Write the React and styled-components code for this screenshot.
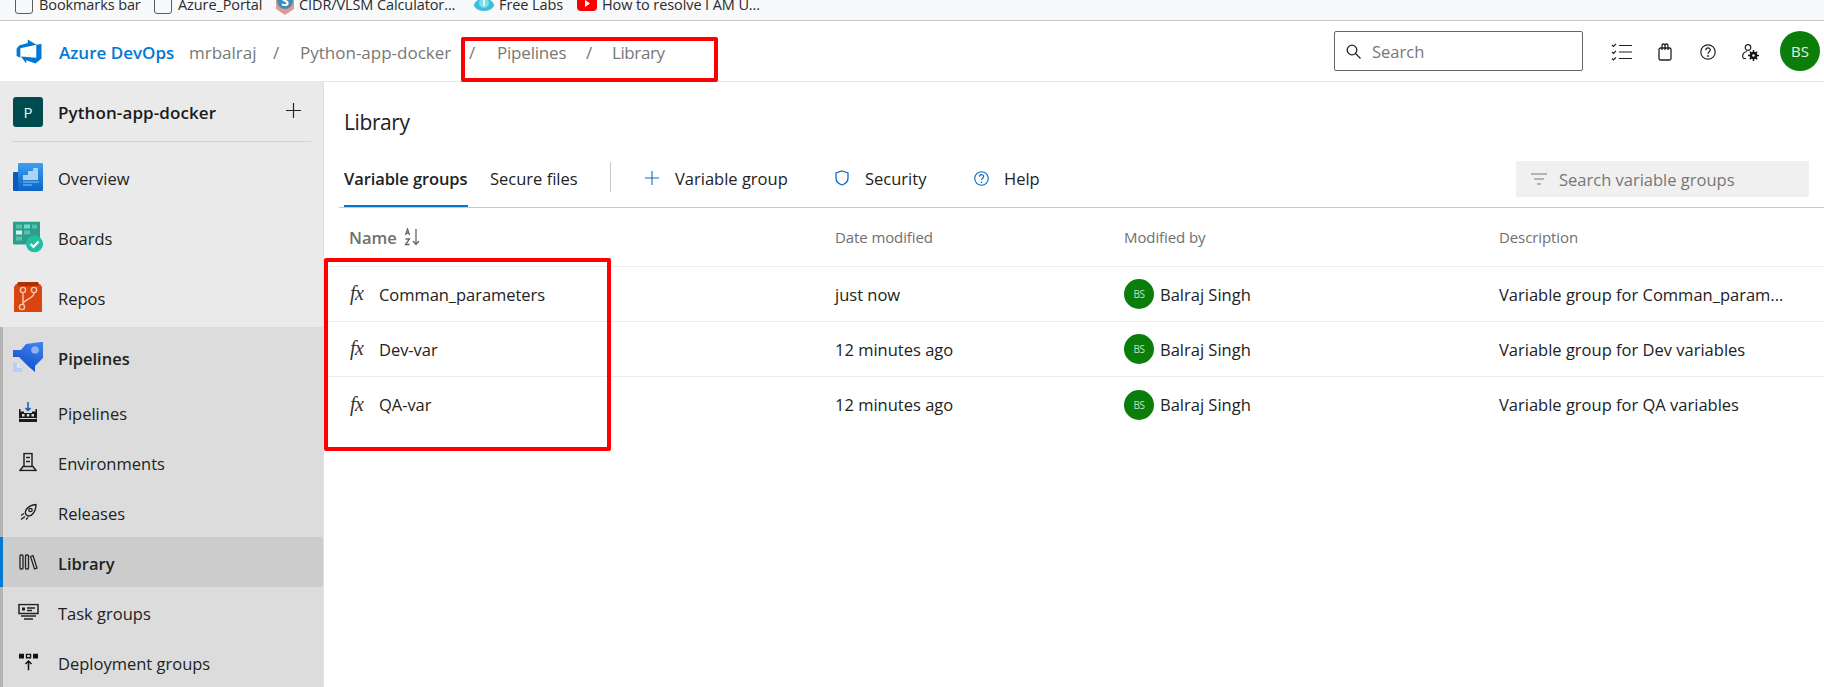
import styled, { createGlobalStyle } from "styled-components";

const GlobalStyle = createGlobalStyle`
  html, body { margin: 0; padding: 0; background: #fff; }
  body { font-family: "Open Sans", "Noto Sans", sans-serif; color: #1e1e1e; }
  * { box-sizing: border-box; }
`;

const Page = styled.div`
  position: relative;
  width: 1824px;
  height: 687px;
  overflow: hidden;
  background: #fff;
`;

/* ====== browser bookmarks ====== */
const BookmarkBar = styled.div`
  height: 21px;
  padding-left: 15px;
  display: flex;
  align-items: flex-end;
  overflow: hidden;
  background: #f8f9fb;
  border-bottom: 1px solid #c9c9cc;
`;

const Bookmark = styled.div`
  height: 30px;
  flex: none;
  width: ${(p) => p.$width}px;
  display: flex;
  align-items: center;
  gap: ${(p) => p.$gap || 6}px;
  font-size: 14.5px;
  letter-spacing: -0.1px;
  color: #2b2b2b;
  white-space: nowrap;
  position: relative;
  top: -1px;
`;

const FolderBox = styled.span`
  width: 18px;
  height: 22px;
  flex: none;
  border: 1.5px solid #5c5c5c;
  border-radius: 3px;
  position: relative;
  top: -1px;
`;

/* ====== top header ====== */
const TopBar = styled.header`
  height: 61px;
  display: flex;
  align-items: center;
  padding: 0 4px 0 16px;
  border-bottom: 1px solid #e8e8e8;
  background: #fff;
`;

const Brand = styled.span`
  margin-left: 16px;
  width: 130px;
  padding-top: 2px;
  font-size: 17px;
  font-weight: 600;
  color: #0078d4;
  white-space: nowrap;
`;

const Crumb = styled.span`
  width: ${(p) => p.$width}px;
  flex: none;
  padding-top: 2px;
  font-size: 17px;
  letter-spacing: ${(p) => p.$spacing || 0}px;
  color: #787878;
  white-space: nowrap;
`;

const TopSearch = styled.div`
  width: 249px;
  height: 40px;
  margin-left: auto;
  display: flex;
  align-items: center;
  gap: 11px;
  padding-left: 11px;
  border: 1px solid #666;
  border-radius: 2px;
  font-size: 16.5px;
  color: #777;
`;

const TopIcons = styled.div`
  display: flex;
  align-items: center;
  margin: 2px 8px 0 17px;
`;

const TopIconSlot = styled.span`
  width: 43px;
  display: flex;
  justify-content: center;
`;

const Avatar = styled.span`
  width: ${(p) => p.$size}px;
  height: ${(p) => p.$size}px;
  flex: none;
  border-radius: 50%;
  background: #0a7d0a;
  color: ${(p) => (p.$small ? "#bfe3bf" : "#e4f3e4")};
  font-size: ${(p) => (p.$small ? 10 : 15)}px;
  letter-spacing: ${(p) => (p.$small ? "-0.5px" : "0")};
  display: flex;
  align-items: center;
  justify-content: center;
`;

/* ====== page body ====== */
const Body = styled.div`
  display: flex;
  height: 605px;
`;

const Sidebar = styled.nav`
  width: 324px;
  flex: none;
  background: #eaeaea;
  border-right: 1px solid #e0e0e0;
  overflow: hidden;
`;

const ProjectRow = styled.div`
  height: 60px;
  margin: 0 12px;
  display: flex;
  align-items: center;
  border-bottom: 1px solid #d2d2d2;
`;

const ProjectTile = styled.span`
  width: 30px;
  height: 30px;
  margin-left: 1px;
  border-radius: 3px;
  background: #004b50;
  color: #dff;
  font-size: 15px;
  display: flex;
  align-items: center;
  justify-content: center;
`;

const ProjectName = styled.span`
  margin-left: 15px;
  padding-top: 2px;
  font-size: 17px;
  font-weight: 600;
  letter-spacing: 0.1px;
  color: #1b1b1b;
`;

const AddProject = styled.span`
  margin-left: auto;
  margin-right: 10px;
  display: flex;
  margin-top: -3px;
`;

const NavList = styled.div`
  padding-top: 5px;
`;

const NavGroup = styled.div`
  background: #dcdcdc;
  border-left: 3px solid #b3b3b3;
`;

const NavRow = styled.div`
  height: ${(p) => p.$height || 50}px;
  display: flex;
  align-items: center;
  padding-top: 3px;
  font-size: 16.5px;
  font-weight: ${(p) => (p.$bold ? 600 : 400)};
  color: #222;
  background: ${(p) => (p.$active ? "#cccccc" : "transparent")};
  border-radius: 0 3px 3px 0;
  position: relative;
  padding-left: ${(p) => (p.$inGroup ? 55 : 58)}px;
`;

const NavIcon = styled.span`
  position: absolute;
  left: ${(p) => p.$left}px;
  top: 50%;
  transform: translateY(-50%);
  display: flex;
`;

const ActiveStrip = styled.span`
  position: absolute;
  left: -3px;
  top: 0;
  bottom: 0;
  width: 3px;
  background: #0078d4;
`;

/* ====== library content ====== */
const Main = styled.main`
  flex: 1;
  min-width: 0;
`;

const Title = styled.h1`
  margin: 0;
  height: 68px;
  padding: 25px 0 0 20px;
  font-size: 21px;
  line-height: 30px;
  font-weight: 400;
  letter-spacing: -0.4px;
  color: #222;
`;

const TabBar = styled.div`
  height: 58px;
  margin-left: 15px;
  padding-left: 5px;
  display: flex;
  align-items: center;
  border-bottom: 1.5px solid #c8c8c8;
`;

const Tab = styled.span`
  height: 100%;
  width: ${(p) => p.$width}px;
  flex: none;
  display: flex;
  align-items: center;
  padding-bottom: 1px;
  font-size: 16.5px;
  font-weight: ${(p) => (p.$active ? 600 : 400)};
  letter-spacing: ${(p) => (p.$active ? "-0.1px" : "0")};
  color: #222;
  white-space: nowrap;
  ${(p) => (p.$active ? "box-shadow: inset 0 -2px 0 #0078d4;" : "")}
`;

const TabDivider = styled.span`
  width: 1px;
  height: 30px;
  margin-bottom: 3px;
  background: #c8c8c8;
  flex: none;
`;

const Action = styled.span`
  flex: none;
  width: ${(p) => p.$width}px;
  padding-left: ${(p) => p.$indent || 0}px;
  display: flex;
  align-items: center;
  gap: ${(p) => p.$gap}px;
  padding-bottom: 1px;
  font-size: 16.5px;
  color: #222;
  white-space: nowrap;
`;

const FilterBox = styled.div`
  width: 293px;
  height: 36px;
  margin-left: auto;
  margin-right: 15px;
  margin-top: 1px;
  display: flex;
  align-items: center;
  gap: 12px;
  padding-left: 15px;
  background: #f0f0f0;
  border-radius: 2px;
  font-size: 16.5px;
  color: #777;
`;

const TableRow = styled.div`
  display: grid;
  grid-template-columns: 511px 289px 375px 1fr;
  align-items: center;
  height: ${(p) => p.$height}px;
  border-bottom: 1px solid #ececec;

  &:last-child {
    border-bottom: 0;
  }
`;

const HeadCell = styled.span`
  display: flex;
  align-items: center;
  gap: 7px;
  font-size: ${(p) => (p.$large ? 16.5 : 15)}px;
  font-weight: ${(p) => (p.$large ? 600 : 400)};
  letter-spacing: ${(p) => (p.$large ? "0" : "-0.1px")};
  color: #707070;
  padding-left: ${(p) => (p.$large ? 25 : 0)}px;
`;

const NameCell = styled.span`
  display: flex;
  align-items: center;
  gap: 13px;
  padding-left: 26px;
  font-size: 16.5px;
  letter-spacing: -0.05px;
  color: #222;
`;

const Fx = styled.span`
  width: 16px;
  font-family: "Liberation Serif", serif;
  font-style: italic;
  font-size: 20px;
  letter-spacing: -0.5px;
  color: #333;
  margin-top: -1px;
`;

const TextCell = styled.span`
  font-size: 16.5px;
  color: #222;
  white-space: nowrap;
`;

const PersonCell = styled(TextCell)`
  display: flex;
  align-items: center;
  gap: 6px;
`;

const Callout = styled.div`
  position: absolute;
  left: ${(p) => p.$left}px;
  top: ${(p) => p.$top}px;
  width: ${(p) => p.$width}px;
  height: ${(p) => p.$height}px;
  border: 4px solid #f00;
  border-radius: 2px;
  pointer-events: none;
`;

/* ====== drawings ====== */
const DevOpsLogo = () => (
  <svg width="27" height="27" viewBox="0 0 18 18">
    <path fill="#0078d4" d="M17 4v9.74l-4 3.28-6.2-2.26V17L3.29 12.41l10.23.8V4.44Zm-3.41.49L7.85 1V3.29L2.08 5 .4 7.16v4.9l2.48 1.09V6.82z" />
  </svg>
);

const OverviewIcon = () => (
  <svg width="30" height="28" viewBox="0 0 30 28">
    <defs>
      <linearGradient id="ov" x1="0" y1="0" x2="0" y2="1">
        <stop offset="0" stopColor="#3d9ff0" />
        <stop offset="1" stopColor="#0c63c7" />
      </linearGradient>
    </defs>
    <path fill="#0b5cb8" d="M1 9h6v19H1a1 1 0 0 1-1-1V10a1 1 0 0 1 1-1z" />
    <rect x="5" y="0" width="25" height="28" rx="1" fill="url(#ov)" />
    <path fill="#a9d3f7" d="M10 12h5V8h5V5h5v12H10z" />
    <path stroke="#8cc4f3" strokeWidth="1.2" d="M10 19h16M10 22h9" />
  </svg>
);

const BoardsIcon = () => (
  <svg width="30" height="31" viewBox="0 0 30 31">
    <rect x="0" y="0" width="27" height="23" rx="1" fill="#2f9d8c" />
    <g fill="#56c2ae">
      <rect x="3" y="3" width="6" height="4" />
      <rect x="11" y="3" width="6" height="4" fill="#74d8c6" />
      <rect x="19" y="3" width="5" height="4" />
      <rect x="3" y="9" width="6" height="4" fill="#d5f3ed" />
      <rect x="11" y="9" width="6" height="4" />
      <rect x="3" y="15" width="6" height="4" />
    </g>
    <circle cx="21.5" cy="22.5" r="8.5" fill="#1fbfa3" />
    <path d="M17.5 22.5l3 3 5-5.5" fill="none" stroke="#fff" strokeWidth="2.2" />
  </svg>
);

const ReposIcon = () => (
  <svg width="28" height="30" viewBox="0 0 28 30">
    <path fill="#a93305" d="M4 0h20l2 4H2z" />
    <path fill="#d9440f" d="M2 2c2 2 4 2 6 2h12c2 0 4 0 6-2l2 3v25H0V5z" />
    <g fill="none" stroke="#f6c9b2" strokeWidth="1.4">
      <circle cx="9" cy="8" r="2.6" />
      <circle cx="20" cy="8" r="2.6" />
      <circle cx="8" cy="25" r="2.6" />
      <path d="M9 11v11M20 11c0 5-7 5-11 10" />
    </g>
  </svg>
);

const PipelinesIcon = () => (
  <svg width="30" height="30" viewBox="0 0 30 30">
    <defs>
      <linearGradient id="pi" x1="0.8" y1="0" x2="0.4" y2="1">
        <stop offset="0" stopColor="#3f80ea" />
        <stop offset="1" stopColor="#0d4fcf" />
      </linearGradient>
    </defs>
    <path fill="url(#pi)" d="M13 2L28 0h2v16l-8 8v6l-6-5L6 15H0V8h8z" />
    <circle cx="22" cy="8" r="3.8" fill="#8fb0f5" />
    <path fill="#b7cdf8" d="M0 21h4v5h5v4H0z" />
    <path fill="#dde7fb" d="M4 21l5 5H4z" />
  </svg>
);

const PipeSubIcon = () => (
  <svg width="20" height="20" viewBox="0 0 20 20">
    <path d="M10 0v8M7.5 6l2.5 2.5L12.5 6" fill="none" stroke="#0f5fa8" strokeWidth="1.5" />
    <path fill="#1a1a1a" d="M1 7h1.5v2.5H6V11h8V9.5h3.5V7H19v13H1z" />
    <g fill="#ddd">
      <rect x="4" y="12" width="2.5" height="2.5" />
      <rect x="8.8" y="12" width="2.5" height="2.5" />
      <rect x="13.5" y="12" width="2.5" height="2.5" />
      <rect x="1.5" y="16" width="17" height="1" />
    </g>
  </svg>
);

const EnvIcon = () => (
  <svg width="18" height="19" viewBox="0 0 18 19">
    <path d="M5 1h8v13H5zM1 18l3-4h10l3 4z" fill="none" stroke="#222" strokeWidth="1.5" />
    <path d="M7 5h4M7 9h4" stroke="#222" strokeWidth="1.5" />
  </svg>
);

const RocketIcon = () => (
  <svg width="17" height="17" viewBox="0 0 17 17">
    <path d="M6 11C4 8 7 2 16 1c0 8-5 12-8 11.5z" fill="none" stroke="#222" strokeWidth="1.4" />
    <circle cx="10.5" cy="6.5" r="1.7" fill="none" stroke="#222" strokeWidth="1.3" />
    <path d="M1 16l4-3M1 12l3-2M6 16l2-2" stroke="#222" strokeWidth="1.3" />
  </svg>
);

const LibraryIcon = () => (
  <svg width="19" height="16" viewBox="0 0 19 16">
    <g fill="none" stroke="#222" strokeWidth="1.3">
      <rect x="1" y="1" width="3" height="14" rx="1" />
      <rect x="6.5" y="1" width="3" height="14" rx="1" />
      <path d="M11.5 2.5l2.500-1 4 12.500-2.500 1z" />
    </g>
  </svg>
);

const TaskIcon = () => (
  <svg width="21" height="17" viewBox="0 0 21 17">
    <rect x="1" y="1" width="19" height="9" fill="none" stroke="#222" strokeWidth="1.5" />
    <path d="M4 4h3v3H4z" fill="#222" />
    <path d="M9 4.5h8M9 7h5M3 12.5h15M6 15.5h9" stroke="#222" strokeWidth="1.3" />
  </svg>
);

const DeployIcon = () => (
  <svg width="19" height="17" viewBox="0 0 19 17">
    <path fill="#111" d="M0 0h5v5H0zM14 0h5v5h-5z" />
    <rect x="7.5" y="0.7" width="4" height="3.6" fill="none" stroke="#111" strokeWidth="1.4" />
    <path d="M9.5 17V8M6.5 10.500l3-3 3 3" fill="none" stroke="#111" strokeWidth="1.5" />
  </svg>
);

const PlusIcon = ({ color = "#222", size = 14 }) => (
  <svg width={size} height={size} viewBox="0 0 14 14">
    <path d="M7 0v14M0 7h14" stroke={color} strokeWidth="1.1" />
  </svg>
);

const SearchIcon = () => (
  <svg width="15" height="15" viewBox="0 0 15 15">
    <circle cx="6" cy="6" r="4.8" fill="none" stroke="#222" strokeWidth="1.3" />
    <path d="M9.5 9.5l5 5" stroke="#222" strokeWidth="1.3" />
  </svg>
);

const ChecklistIcon = () => (
  <svg width="21" height="18" viewBox="0 0 21 18">
    <g fill="none" stroke="#222" strokeWidth="1.2">
      <path d="M1 2l1.5 1.5L5 .8M1 9l1.5 1.5L5 7.8M1 15.5L2.5 17 5 14.3" />
      <path d="M8 2.5h13M8 9h13M8 15.5h13" />
    </g>
  </svg>
);

const BagIcon = () => (
  <svg width="14" height="18" viewBox="0 0 14 18">
    <g fill="none" stroke="#222" strokeWidth="1.3">
      <rect x="1" y="5" width="12" height="12" rx="1.5" />
      <path d="M4 7V2.5a1.500 1.500 0 0 1 3 0V7M7 2.5a1.500 1.500 0 0 1 3 0V7" />
    </g>
  </svg>
);

const HelpIcon = ({ color = "#222", size = 16 }) => (
  <svg width={size} height={size} viewBox="0 0 16 16">
    <circle cx="8" cy="8" r="7.2" fill="none" stroke={color} strokeWidth="1.2" />
    <path d="M5.8 6.2c0-3 4.500-3 4.500-.2 0 1.700-2.300 1.700-2.300 3.700" fill="none" stroke={color} strokeWidth="1.2" />
    <circle cx="8" cy="12" r=".9" fill={color} />
  </svg>
);

const UserGearIcon = () => (
  <svg width="17" height="17" viewBox="0 0 17 17">
    <circle cx="6" cy="3.5" r="2.8" fill="none" stroke="#222" strokeWidth="1.2" />
    <path d="M1 14c-1-4 1-6 4-6.500M1 14.500h3" fill="none" stroke="#222" strokeWidth="1.2" />
    <circle cx="11.5" cy="11.5" r="3.8" fill="#111" />
    <path d="M11.5 6v11M6 11.500h11M7.800 7.800l7.400 7.400M15.200 7.800l-7.400 7.400" stroke="#111" strokeWidth="1.4" />
    <circle cx="11.5" cy="11.5" r="1.3" fill="#fff" />
  </svg>
);

const ShieldIcon = () => (
  <svg width="14" height="16" viewBox="0 0 14 16">
    <path d="M7 1l6 2v5c0 4-3 6-6 7-3-1-6-3-6-7V3z" fill="none" stroke="#0f6cbd" strokeWidth="1.3" />
  </svg>
);

const FilterIcon = () => (
  <svg width="16" height="12" viewBox="0 0 16 12">
    <path d="M0 1h16M3 6h10M6 11h4" stroke="#777" strokeWidth="1.2" />
  </svg>
);

const SortIcon = () => (
  <svg width="16" height="18" viewBox="0 0 16 18">
    <g fill="none" stroke="#666" strokeWidth="1.3">
      <path d="M1.500 7l2-6 2 6M2.200 5h2.600M1.500 11h4l-4 5.500h4" />
      <path d="M12 1v15M9 13l3 3.500 3-3.500" />
    </g>
  </svg>
);

const SkypeDot = () => (
  <svg width="20" height="22" viewBox="0 0 20 22">
    <path d="M1 0h18v16l-9 6-9-6z" fill="#e29a95" />
    <circle cx="10" cy="8" r="8" fill="#3d8fb8" />
    <text x="10" y="13" textAnchor="middle" fontSize="14" fontWeight="700" fill="#fff">S</text>
  </svg>
);

const CloudDot = () => (
  <svg width="20" height="14" viewBox="0 0 20 14">
    <ellipse cx="10" cy="8" rx="10" ry="6" fill="#39c0d8" />
    <circle cx="10" cy="6" r="5" fill="#7fdcec" />
    <path d="M10 3v6" stroke="#fff" strokeWidth="1.5" />
  </svg>
);

const YoutubeDot = () => (
  <svg width="20" height="16" viewBox="0 0 20 16">
    <rect width="20" height="15" rx="4" fill="#f00" />
    <path d="M8 4l5 3.500L8 11z" fill="#fff" />
  </svg>
);

const rows = [
  { name: "Comman_parameters", date: "just now", desc: "Variable group for Comman_param..." },
  { name: "Dev-var", date: "12 minutes ago", desc: "Variable group for Dev variables" },
  { name: "QA-var", date: "12 minutes ago", desc: "Variable group for QA variables" },
];

export default function App() {
  return (
    <Page>
      <GlobalStyle />
      <BookmarkBar>
        <Bookmark $width={139}><FolderBox />Bookmarks bar</Bookmark>
        <Bookmark $width={121}><FolderBox />Azure_Portal</Bookmark>
        <Bookmark $width={199} $gap={4}><SkypeDot />CIDR/VLSM Calculator...</Bookmark>
        <Bookmark $width={103} $gap={5}><CloudDot />Free Labs</Bookmark>
        <Bookmark $width={190} $gap={5}><YoutubeDot />How to resolve I AM U...</Bookmark>
      </BookmarkBar>

      <TopBar>
        <DevOpsLogo />
        <Brand>Azure DevOps</Brand>
        <Crumb $width={84}>mrbalraj</Crumb>
        <Crumb $width={27}>/</Crumb>
        <Crumb $width={169}>Python-app-docker</Crumb>
        <Crumb $width={28}>/</Crumb>
        <Crumb $width={89} $spacing={-0.2}>Pipelines</Crumb>
        <Crumb $width={26}>/</Crumb>
        <Crumb $width={60} $spacing={-0.4}>Library</Crumb>
        <TopSearch><SearchIcon />Search</TopSearch>
        <TopIcons>
          <TopIconSlot><ChecklistIcon /></TopIconSlot>
          <TopIconSlot><BagIcon /></TopIconSlot>
          <TopIconSlot><HelpIcon /></TopIconSlot>
          <TopIconSlot><UserGearIcon /></TopIconSlot>
        </TopIcons>
        <Avatar $size={40}>BS</Avatar>
      </TopBar>

      <Body>
        <Sidebar>
          <ProjectRow>
            <ProjectTile>P</ProjectTile>
            <ProjectName>Python-app-docker</ProjectName>
            <AddProject><PlusIcon size={15} /></AddProject>
          </ProjectRow>
          <NavList>
            <NavRow $height={60}><NavIcon $left={13}><OverviewIcon /></NavIcon>Overview</NavRow>
            <NavRow $height={60}><NavIcon $left={13}><BoardsIcon /></NavIcon>Boards</NavRow>
            <NavRow $height={60}><NavIcon $left={14}><ReposIcon /></NavIcon>Repos</NavRow>
            <NavGroup>
              <NavRow $height={60} $bold $inGroup><NavIcon $left={10}><PipelinesIcon /></NavIcon>Pipelines</NavRow>
              <NavRow $inGroup><NavIcon $left={15}><PipeSubIcon /></NavIcon>Pipelines</NavRow>
              <NavRow $inGroup><NavIcon $left={16}><EnvIcon /></NavIcon>Environments</NavRow>
              <NavRow $inGroup><NavIcon $left={17}><RocketIcon /></NavIcon>Releases</NavRow>
              <NavRow $inGroup $bold $active><ActiveStrip /><NavIcon $left={16}><LibraryIcon /></NavIcon>Library</NavRow>
              <NavRow $inGroup><NavIcon $left={15}><TaskIcon /></NavIcon>Task groups</NavRow>
              <NavRow $inGroup><NavIcon $left={16}><DeployIcon /></NavIcon>Deployment groups</NavRow>
            </NavGroup>
          </NavList>
        </Sidebar>

        <Main>
          <Title>Library</Title>
          <TabBar>
            <Tab $active $width={124}>Variable groups</Tab>
            <Tab $width={22} />
            <Tab $width={120}>Secure files</Tab>
            <TabDivider />
            <Action $width={224} $indent={34} $gap={16}><PlusIcon color="#0f6cbd" />Variable group</Action>
            <Action $width={139} $gap={16}><ShieldIcon />Security</Action>
            <Action $width={100} $gap={15}><HelpIcon color="#0f6cbd" size={15} />Help</Action>
            <FilterBox><FilterIcon />Search variable groups</FilterBox>
          </TabBar>
          <TableRow $height={59}>
            <HeadCell $large>Name <SortIcon /></HeadCell>
            <HeadCell>Date modified</HeadCell>
            <HeadCell>Modified by</HeadCell>
            <HeadCell>Description</HeadCell>
          </TableRow>
          {rows.map((row) => (
            <TableRow $height={55} key={row.name}>
              <NameCell><Fx>fx</Fx>{row.name}</NameCell>
              <TextCell>{row.date}</TextCell>
              <PersonCell><Avatar $size={30} $small>BS</Avatar>Balraj Singh</PersonCell>
              <TextCell>{row.desc}</TextCell>
            </TableRow>
          ))}
        </Main>
      </Body>

      <Callout $left={461} $top={37} $width={257} $height={45} />
      <Callout $left={324} $top={258} $width={287} $height={193} />
    </Page>
  );
}
